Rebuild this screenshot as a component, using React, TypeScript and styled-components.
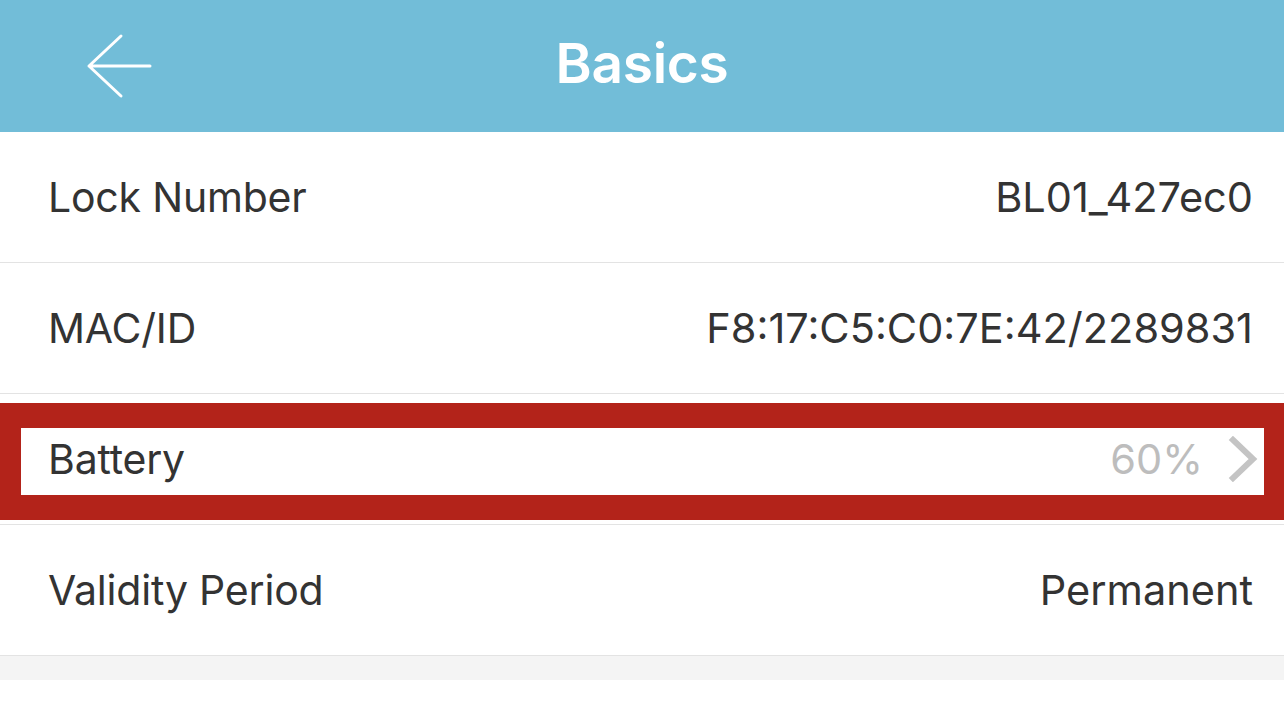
import React from "react";
import styled, { createGlobalStyle } from "styled-components";

const Global = createGlobalStyle`
  html, body { margin: 0; padding: 0; background: #ffffff; }
  body { font-family: Inter, "Liberation Sans", sans-serif; -webkit-font-smoothing: antialiased; }
`;

const Page = styled.div`
  width: 1284px;
  height: 701px;
  display: flex;
  flex-direction: column;
  background: #ffffff;
  overflow: hidden;
`;

const Header = styled.header`
  height: 132px;
  flex: none;
  background: #72bdd8;
  display: grid;
  grid-template-columns: 200px 1fr 200px;
  align-items: center;
`;

const BackButton = styled.button`
  border: 0;
  background: none;
  padding: 0 0 0 86px;
  height: 100%;
  display: flex;
  align-items: center;
  cursor: pointer;
`;

const Title = styled.h1`
  margin: 0;
  text-align: center;
  color: #ffffff;
  font-family: Inter, "Liberation Sans", sans-serif;
  font-weight: 600;
  font-size: 55px;
  letter-spacing: -0.3px;
  padding-left: 0px;
  padding-bottom: 6px;
`;

const List = styled.div`
  display: flex;
  flex-direction: column;
`;

const Row = styled.div`
  position: relative;
  height: 131px;
  box-sizing: border-box;
  border-bottom: 1px solid #e3e3e3;
  display: flex;
  align-items: center;
  justify-content: space-between;
  padding: 0 31px 0 48px;
`;

const Label = styled.span`
  font-family: Inter, "Liberation Sans", sans-serif;
  font-size: 41px;
  color: #333333;
  letter-spacing: -0.2px;
`;

const Value = styled.span<{ $muted?: boolean }>`
  display: flex;
  align-items: center;
  gap: 25px;
  font-family: Inter, "Liberation Sans", sans-serif;
  font-size: 41.5px;
  color: ${(p) => (p.$muted ? "#bdbdbd" : "#333333")};
  letter-spacing: 0px;
`;

const ChevronWrap = styled.span`
  display: flex;
  margin-right: -5px;
`;

const Highlight = styled.div`
  position: absolute;
  left: 0;
  right: 0;
  top: 9px;
  height: 117px;
  box-sizing: border-box;
  border-style: solid;
  border-color: #b3231a;
  border-width: 25px 20px 25px 21px;
  pointer-events: none;
`;

const Gap = styled.div`
  height: 24px;
  background: #f4f4f4;
`;

const BackArrow = () => (
  <svg width="68" height="66" viewBox="0 0 68 66" fill="none">
    <path
      d="M35 3 L3 33 L35 63 M3 33 H64"
      stroke="#ffffff"
      strokeWidth="3"
      strokeLinecap="round"
      strokeLinejoin="round"
    />
  </svg>
);

const Chevron = () => (
  <svg width="30" height="46" viewBox="0 0 30 46" fill="none">
    <path d="M5 4 L25 23 L5 42" stroke="#c4c4c4" strokeWidth="6" strokeLinecap="square" />
  </svg>
);

const rows = [
  { label: "Lock Number", value: "BL01_427ec0" },
  { label: "MAC/ID", value: "F8:17:C5:C0:7E:42/2289831" },
];

export default function App() {
  return (
    <>
      <Global />
      <Page>
        <Header>
          <BackButton aria-label="Back">
            <BackArrow />
          </BackButton>
          <Title>Basics</Title>
          <div />
        </Header>
        <List>
          {rows.map((r) => (
            <Row key={r.label}>
              <Label>{r.label}</Label>
              <Value>{r.value}</Value>
            </Row>
          ))}
          <Row>
            <Label>Battery</Label>
            <Value $muted>
              60%
              <ChevronWrap>
                <Chevron />
              </ChevronWrap>
            </Value>
            <Highlight />
          </Row>
          <Row>
            <Label>Validity Period</Label>
            <Value>Permanent</Value>
          </Row>
        </List>
        <Gap />
      </Page>
    </>
  );
}
